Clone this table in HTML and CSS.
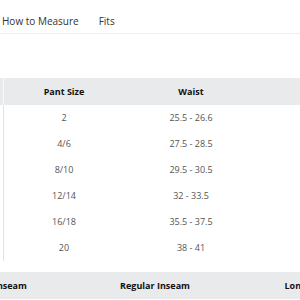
FILE: index.html
```html
<!DOCTYPE html>
<html lang="en">
<head>
<meta charset="utf-8">
<link rel="stylesheet" href="styles.css">
</head>
<body>
<nav class="tabs">
  <span class="tab">How to Measure</span>
  <span class="tab">Fits</span>
</nav>
<div class="scroller">
  <table class="chart chart-size">
    <colgroup><col class="c-stub"><col class="c-size"><col class="c-waist"><col class="c-hip"></colgroup>
    <thead>
      <tr><th class="stub"></th><th>Pant Size</th><th>Waist</th><th></th></tr>
    </thead>
    <tbody>
      <tr><td class="stub"></td><td>2</td><td>25.5 - 26.6</td><td></td></tr>
      <tr><td class="stub"></td><td>4/6</td><td>27.5 - 28.5</td><td></td></tr>
      <tr><td class="stub"></td><td>8/10</td><td>29.5 - 30.5</td><td></td></tr>
      <tr><td class="stub"></td><td>12/14</td><td>32 - 33.5</td><td></td></tr>
      <tr><td class="stub"></td><td>16/18</td><td>35.5 - 37.5</td><td></td></tr>
      <tr><td class="stub"></td><td>20</td><td>38 - 41</td><td></td></tr>
    </tbody>
  </table>
</div>
<div class="scroller">
  <table class="chart chart-inseam">
    <colgroup><col class="c-in"><col class="c-in"><col class="c-in"></colgroup>
    <thead>
      <tr><th>Short Inseam</th><th>Regular Inseam</th><th>Long Inseam</th></tr>
    </thead>
  </table>
</div>
</body>
</html>
```

FILE: styles.css
```css
html, body {
  margin: 0;
  padding: 0;
  background: #ffffff;
  overflow: hidden;
}
body {
  font-family: "Open Sans", "Liberation Sans", sans-serif;
  color: #333333;
  width: 300px;
  height: 300px;
}
.tabs {
  display: flex;
  gap: 20px;
  padding: 14px 0 5px 2px;
  border-bottom: 1px solid #eeeeee;
  font-size: 10px;
  line-height: 14px;
  color: #333333;
}
.scroller {
  overflow: hidden;
  width: 300px;
}
.chart {
  border-collapse: separate;
  border-spacing: 0;
  table-layout: fixed;
  font-size: 9px;
  line-height: 12px;
}
.chart th {
  background: #e9eaec;
  color: #111111;
  font-weight: 700;
  height: 27px;
  padding: 0;
  text-align: center;
  white-space: nowrap;
}
.chart td {
  height: 26px;
  padding: 0;
  text-align: center;
  color: #555555;
  white-space: nowrap;
}
.chart-size {
  margin: 44px 0 0 -100px;
  width: 492px;
}
.c-stub { width: 104px; }
.c-size { width: 120px; }
.c-waist { width: 134px; }
.c-hip { width: 134px; }
th.stub { border-right: 1px solid #f8f8f8; }
td.stub { border-right: 1px solid #e2e2e2; }
.chart-inseam {
  margin: 11px 0 0 -82px;
  width: 474px;
}
.c-in { width: 158px; }
```
